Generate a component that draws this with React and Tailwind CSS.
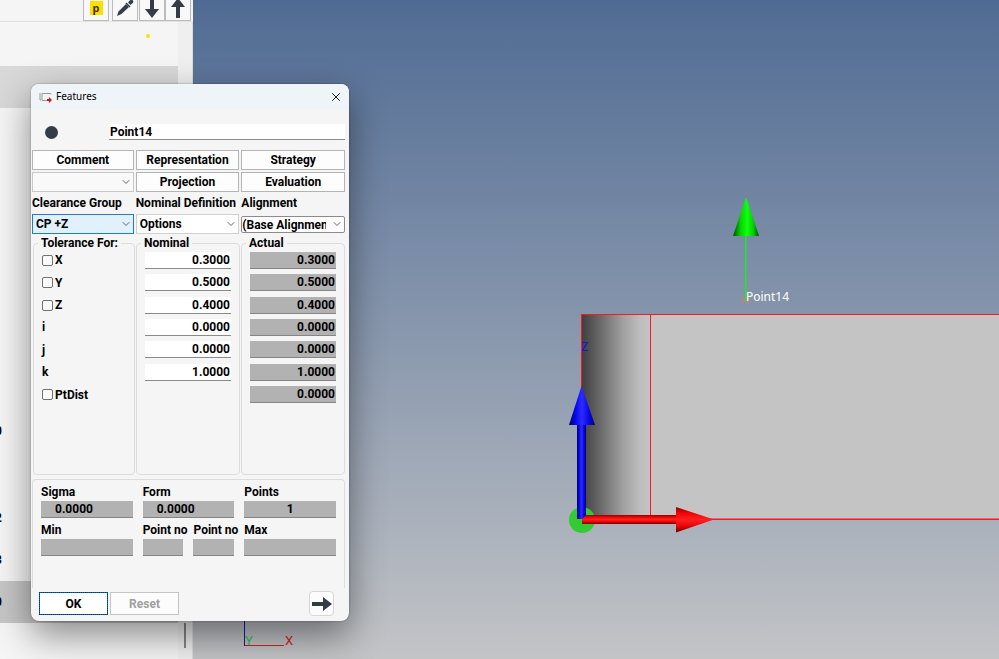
import { useState } from 'react';
import { X, ChevronDown } from 'lucide-react';

const AXES = [
  { id: 'x', label: 'X', check: true, nominal: '0.3000', actual: '0.3000' },
  { id: 'y', label: 'Y', check: true, nominal: '0.5000', actual: '0.5000' },
  { id: 'z', label: 'Z', check: true, nominal: '0.4000', actual: '0.4000' },
  { id: 'i', label: 'i', nominal: '0.0000', actual: '0.0000' },
  { id: 'j', label: 'j', nominal: '0.0000', actual: '0.0000' },
  { id: 'k', label: 'k', nominal: '1.0000', actual: '1.0000' },
  { id: 'ptdist', label: 'PtDist', check: true, nominal: null, actual: '0.0000' },
];

export default function App() {
  return (
    <div className="relative flex h-screen overflow-hidden bg-[#f5f5f5] font-['Roboto',sans-serif] text-xs text-black">
      <Sidebar />
      <Viewport />
      <FeaturesDialog />
    </div>
  );
}

/* Feature list, mostly covered by the dialog */
function Sidebar() {
  return (
    <aside className="flex w-[193px] shrink-0 flex-col bg-[#f5f5f5]">
      <div className="flex h-[22px] shrink-0 items-end justify-end border-b border-[#e2e2e2] pr-[2px]">
        <ToolButton label="Probe">
          <span className="flex h-[14px] w-[13px] items-center justify-center bg-[#ffdf00] font-['Noto_Sans',sans-serif] text-[11px] font-bold leading-[14px] text-[#3d3800]">p</span>
        </ToolButton>
        <span className="w-[3px]" />
        <ToolButton label="Edit">
          <svg width="18" height="18" viewBox="0 0 18 18" fill="#343d47">
            <path d="M1 17l1.500-4.500L10 5l3 3-7.500 7z" />
            <path d="M10.500 3.500l4 4-1 1-4-4zM12 3.500L14 1.300a1.900 1.900 0 0 1 2.700 2.700L14.500 6z" />
          </svg>
        </ToolButton>
        <span className="w-px" />
        <ToolButton label="Move down">
          <ArrowGlyph className="rotate-90" />
        </ToolButton>
        <ToolButton label="Move up">
          <ArrowGlyph className="-rotate-90" />
        </ToolButton>
      </div>
      <div className="flex min-h-0 flex-1">
        <ul className="flex flex-1 flex-col">
          <li className="flex h-11 shrink-0 items-start justify-end pr-[28px] pt-[12px]">
            <span className="size-[4px] rounded-full bg-[#ffe300]" />
          </li>
          <li className="h-[42px] shrink-0 bg-[#d8d8d8]" />
          <li className="h-[302px] shrink-0" />
          <ListRow text="0" />
          <li className="h-[45px] shrink-0" />
          <ListRow text="2" />
          <ListRow text="3" />
          <ListRow text="0" selected />
        </ul>
        <div className="flex w-[15px] flex-col items-center border-r border-[#dcdcdc] bg-[#efefef] pt-[601px]">
          <div className="h-[25px] w-[2px] shrink-0 bg-[#858585]" />
        </div>
      </div>
    </aside>
  );
}

function ToolButton({ label, children }) {
  return (
    <button type="button" aria-label={label} className="flex h-[27px] w-[26px] shrink-0 items-center justify-center border border-[#bcbcbc] bg-[#f8f8f8]">
      {children}
    </button>
  );
}

function ListRow({ text, selected }) {
  return (
    <li className={`flex h-[42px] shrink-0 items-center ${selected ? 'bg-[#c6c6c6]' : ''}`}>
      <span className="flex w-[2px] justify-end overflow-hidden font-bold">{text}</span>
    </li>
  );
}

function ArrowGlyph({ className = '' }) {
  return (
    <svg width="22" height="16" viewBox="0 0 22 16" fill="#343d47" className={className}>
      <path d="M1 6h11V1l9 7-9 7v-5H1z" />
    </svg>
  );
}

/* 3D view with the part, the alignment axes and the point vector */
function Viewport() {
  return (
    <main className="min-w-0 flex-1 bg-linear-to-b from-[#506b93] to-[#c3c4c6]">
      <svg className="block size-full" role="img" aria-label="Part view">
        <defs>
          <linearGradient id="bend">
            <stop offset="0" stopColor="#404040" />
            <stop offset="0.250" stopColor="#666" />
            <stop offset="0.600" stopColor="#a0a0a0" />
            <stop offset="0.850" stopColor="#bdbdbd" />
            <stop offset="1" stopColor="#c4c4c4" />
          </linearGradient>
          <linearGradient id="blue">
            <stop offset="0" stopColor="#00005a" />
            <stop offset="0.250" stopColor="#0808ef" />
            <stop offset="0.500" stopColor="#2c2cff" />
            <stop offset="0.750" stopColor="#0808ef" />
            <stop offset="1" stopColor="#00006a" />
          </linearGradient>
          <linearGradient id="red" x1="0" y1="0" x2="0" y2="1">
            <stop offset="0" stopColor="#900000" />
            <stop offset="0.250" stopColor="#f20505" />
            <stop offset="0.500" stopColor="#ff2020" />
            <stop offset="0.750" stopColor="#e80404" />
            <stop offset="1" stopColor="#700000" />
          </linearGradient>
          <linearGradient id="green">
            <stop offset="0" stopColor="#004c00" />
            <stop offset="0.300" stopColor="#04d704" />
            <stop offset="0.550" stopColor="#10ff10" />
            <stop offset="0.800" stopColor="#04c804" />
            <stop offset="1" stopColor="#004c00" />
          </linearGradient>
        </defs>

        <rect x="389" y="314" width="100%" height="205" fill="#c4c4c4" />
        <rect x="389" y="314" width="68" height="205" fill="url(#bend)" />
        <g stroke="#ff1616">
          <line x1="388" y1="314.500" x2="100%" y2="314.500" />
          <line x1="388.500" y1="314" x2="388.500" y2="390" />
          <line x1="457.500" y1="314" x2="457.500" y2="519" />
          <line x1="389" y1="519.300" x2="100%" y2="519.300" strokeWidth="1.400" />
        </g>

        <text x="388" y="351" fontSize="12" fill="#1414f0">Z</text>
        <circle cx="389" cy="520" r="13" fill="#32cc32" />
        <rect x="384" y="423" width="9" height="96" fill="url(#blue)" />
        <path d="M388.500 386L402 425H376z" fill="url(#blue)" />
        <path d="M389 519l4-4h91v9h-95z" fill="url(#red)" />
        <path d="M483 507l38 12.500-38 13z" fill="url(#red)" />

        <line x1="552.700" y1="235" x2="552.700" y2="300" stroke="#18f018" strokeWidth="1.400" />
        <path d="M553 197l13 39h-26z" fill="url(#green)" />
        <path d="M549 297l7 7M549 304l7-7" stroke="#e88030" />
        <text x="553" y="301" fontSize="12" fill="#fff" className="font-['Noto_Sans',sans-serif]">Point14</text>

        <rect x="51" y="600" width="1" height="46" fill="#1414c8" />
        <line x1="52" y1="645.500" x2="91" y2="645.500" stroke="#d42020" />
        <text x="52" y="645" fontSize="13" fill="#30c830">Y</text>
        <text x="92" y="645" fontSize="13" fill="#d82020">X</text>
      </svg>
    </main>
  );
}

function FeaturesDialog() {
  const [name, setName] = useState('Point14');

  return (
    <section role="dialog" aria-label="Features" className="absolute left-[31px] top-[84px] w-[318px] overflow-hidden rounded-lg bg-[#f5f5f5] pb-[5px] font-bold shadow-[0_14px_36px_rgba(0,0,0,0.45),0_0_2px_rgba(0,0,0,0.4)]">
      <header className="flex h-[26px] items-center bg-[#eff4f9] pl-2 pr-[6px]">
        <svg width="13" height="11" viewBox="0 0 13 11" fill="none">
          <path d="M12 2.500V1.500H3v7h5M1 1v7h1" stroke="#9a9a9a" />
          <path d="M8 7h2V5l3 3-3 3V9H8z" fill="#e01010" />
        </svg>
        <h1 className="ml-1 flex-1 font-['Noto_Sans',sans-serif] text-[10px] font-normal">Features</h1>
        <button type="button" aria-label="Close">
          <X size={14} strokeWidth={1.5} />
        </button>
      </header>

      <div className="pl-px pr-1 pt-[14px]">
        <div className="flex items-center pl-[13px]">
          <span className="size-[13px] rounded-full bg-[#343d47]" />
          <input
            aria-label="Feature name"
            value={name}
            onChange={(e) => setName(e.target.value)}
            className="ml-[51px] h-4 min-w-0 flex-1 border-b border-[#8a8a8a] bg-white px-px"
          />
        </div>

        <div className="mt-[10px] grid grid-cols-[102fr_104fr_104fr] gap-x-[2px] gap-y-[2px]">
          <DialogButton>Comment</DialogButton>
          <DialogButton>Representation</DialogButton>
          <DialogButton>Strategy</DialogButton>
          <Select label="Comment template" options={['']} className="h-[20px] border-[#c8c8c8] bg-[#f9f9f9]" />
          <DialogButton>Projection</DialogButton>
          <DialogButton>Evaluation</DialogButton>
        </div>

        <div className="mt-[3px] grid grid-cols-[102fr_104fr_104fr] gap-x-[2px] whitespace-nowrap leading-[16px]">
          <label htmlFor="clearance">Clearance Group</label>
          <label htmlFor="definition">Nominal Definition</label>
          <label htmlFor="alignment">Alignment</label>
        </div>
        <div className="mt-[3px] grid grid-cols-[102fr_104fr_104fr] items-center gap-x-[2px]">
          <Select id="clearance" options={['CP +Z']} className="h-[20px] border-[#1a7fd0] bg-[#e2f0fb]" />
          <Select id="definition" options={['Options']} className="h-[20px] border-[#d0d0d0] bg-white" />
          <Select id="alignment" options={['(Base Alignment)']} className="h-[17px] border-[#8c8c8c] bg-white" tight />
        </div>

        <div className="mt-[2px] grid grid-cols-[102fr_104fr_104fr] gap-x-px pl-px">
          <Group title="Tolerance For:">
            {AXES.map((a) => (
              <div key={a.id} className="flex items-center pl-2">
                {a.check ? (
                  <label className="flex items-center gap-[2px]">
                    <input type="checkbox" className="size-[11px] appearance-none rounded-xs border border-[#707070] bg-[#fafafa] checked:bg-[#1a7fd0]" />
                    {a.label}
                  </label>
                ) : (
                  <span>{a.label}</span>
                )}
              </div>
            ))}
          </Group>
          <Group title="Nominal">
            {AXES.map((a) => (
              <div key={a.id} className="flex items-center px-2">
                {a.nominal !== null && (
                  <input aria-label={`Nominal ${a.label}`} defaultValue={a.nominal} className="h-[17px] w-full border-b border-[#8a8a8a] bg-white px-px text-right" />
                )}
              </div>
            ))}
          </Group>
          <Group title="Actual">
            {AXES.map((a) => (
              <div key={a.id} className="flex items-center px-2">
                <ReadOnly label={`Actual ${a.label}`} value={a.actual} className="w-full text-right" />
              </div>
            ))}
          </Group>
        </div>

        <div className="mt-1 h-[109px] rounded-t-sm border border-b-0 border-[#dcdcdc] px-2 pt-1">
          <div className="grid grid-cols-3 gap-x-[10px]">
            <Result label="Sigma" value="0.0000" className="pl-[14px]" />
            <Result label="Form" value="0.0000" className="pl-[14px]" />
            <Result label="Points" value="1" className="text-center" />
          </div>
          <div className="mt-1 grid grid-cols-3 gap-x-[10px]">
            <Result label="Min" value="" />
            <div className="grid grid-cols-2 gap-x-[10px]">
              <Result label="Point no" value="" name="Point no of minimum" />
              <Result label="Point no" value="" name="Point no of maximum" />
            </div>
            <Result label="Max" value="" />
          </div>
        </div>

        <footer className="mt-[3px] flex items-center gap-[2px] pl-[7px] pr-[11px]">
          <button type="button" className="h-[23px] w-[69px] border border-[#0067c0] bg-white outline-1 -outline-offset-1 outline-dotted outline-[#003a70]">OK</button>
          <button type="button" disabled className="h-[23px] w-[69px] border border-[#c4c4c4] bg-[#fcfcfc] text-[#a0a0a0]">Reset</button>
          <button type="button" aria-label="Next" className="ml-auto flex size-[25px] items-center justify-center rounded-sm border border-[#d6d6d6] bg-[#fcfcfc]">
            <ArrowGlyph />
          </button>
        </footer>
      </div>
    </section>
  );
}

function DialogButton({ children }) {
  return (
    <button type="button" className="h-[20px] border border-[#b4b4b4] bg-[#fdfdfd]">{children}</button>
  );
}

function Select({ id, label, options, className, tight }) {
  return (
    <div className="relative flex min-w-0">
      <select id={id} aria-label={label} className={`w-full appearance-none overflow-hidden border ${tight ? 'rounded-xs pr-[18px]' : 'pl-[3px] pr-4'} ${className}`}>
        {options.map((o) => <option key={o}>{o}</option>)}
      </select>
      <ChevronDown size={12} strokeWidth={2} className="pointer-events-none absolute right-[2px] top-1/2 -translate-y-1/2 text-[#666]" />
    </div>
  );
}

function Group({ title, children }) {
  return (
    <fieldset className="h-[239px] min-w-0 rounded-sm border border-[#dcdcdc]">
      <legend className="ml-1 px-[3px] leading-[14px]">{title}</legend>
      <div className="-mt-px grid h-[157px] grid-rows-7">{children}</div>
    </fieldset>
  );
}

function ReadOnly({ label, value, className = '' }) {
  return (
    <input readOnly aria-label={label} value={value} className={`h-[17px] border-b border-[#858585] bg-[#b2b2b2] px-px ${className}`} />
  );
}

function Result({ label, name, value, className = '' }) {
  return (
    <label className="flex min-w-0 flex-col">
      <span className="whitespace-nowrap leading-[16px]">{label}</span>
      <ReadOnly label={name ?? label} value={value} className={`mt-px w-full ${className}`} />
    </label>
  );
}
